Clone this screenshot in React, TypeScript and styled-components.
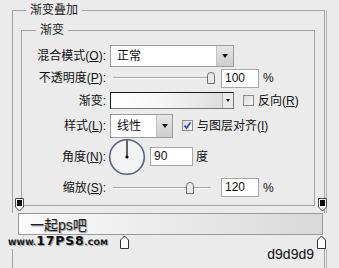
import React from 'react';
import styled, { createGlobalStyle } from 'styled-components';

const GlobalStyle = createGlobalStyle`
  html, body { margin: 0; padding: 0; background: #ebebeb; }
  body { font-family: "Liberation Sans", "Noto Sans CJK SC", sans-serif; }
`;

const cjk = `"Liberation Sans", "Noto Sans CJK SC", sans-serif`;

const Page = styled.div`
  position: relative;
  width: 339px;
  height: 268px;
  overflow: hidden;
  background: #ebebeb;
  color: #000;
  font-size: 12px;
`;

const Group = styled.fieldset<{ $outer?: boolean }>`
  box-sizing: border-box;
  min-width: 0;
  margin: ${p => (p.$outer ? '4px 0 0 12px' : '0')};
  width: ${p => (p.$outer ? '313px' : '294px')};
  height: ${p => (p.$outer ? '300px' : 'auto')};
  padding: ${p => (p.$outer ? '7px 0 0 8px' : '7px 0 4px 0')};
  border: 1px solid #a3a3a3;
`;

const Title = styled.legend<{ $offset: number }>`
  margin-left: ${p => p.$offset}px;
  padding: 0 4px;
  font-family: ${cjk};
  font-size: 12px;
  line-height: 13px;
  color: #1a1a1a;
`;

const Form = styled.div`
  display: grid;
  grid-template-columns: 84px 1fr;
  grid-template-rows: 23px 22px 23px 27px 35px 27px;
  column-gap: 4px;
  align-items: center;
`;

const Label = styled.label`
  text-align: right;
  font-family: ${cjk};
  font-size: 12px;
  line-height: 14px;
  white-space: nowrap;
  color: #111;
`;

const Key = styled.span`
  text-decoration: underline;
`;

const Controls = styled.div`
  display: flex;
  align-items: center;
  font-family: ${cjk};
  font-size: 12px;
  line-height: 14px;
  white-space: nowrap;
  color: #111;
`;

const Select = styled.div<{ $w: number; $h: number }>`
  box-sizing: border-box;
  display: flex;
  width: ${p => p.$w}px;
  height: ${p => p.$h}px;
  border: 1px solid #9c9c9c;
  background: #fff;
`;

const SelectText = styled.span`
  flex: 1;
  display: flex;
  align-items: center;
  padding-left: 6px;
`;

const DropButton = styled.span<{ $w: number }>`
  width: ${p => p.$w}px;
  display: flex;
  align-items: center;
  justify-content: center;
  background: linear-gradient(#e6e6e6, #cdcdcd);
  border-left: 1px solid #c2c2c2;

  &::after {
    content: '';
    border-left: 3px solid transparent;
    border-right: 3px solid transparent;
    border-top: 4px solid #111;
  }
`;

const GradientPick = styled.div`
  box-sizing: border-box;
  display: flex;
  justify-content: flex-end;
  width: 124px;
  height: 17px;
  border: 1px solid #1c1c1c;
  border-right-color: #777;
  border-bottom-color: #777;
  background: linear-gradient(to right, #ffffff 0%, #f6f6f6 40%, #d9d9d9 100%);
`;

const PickArrow = styled.span`
  width: 10px;
  display: flex;
  align-items: center;
  justify-content: center;
  background: #e9e9e9;
  border-left: 1px solid #b5b5b5;

  &::after {
    content: '';
    border-left: 2px solid transparent;
    border-right: 2px solid transparent;
    border-top: 3px solid #111;
  }
`;

const Slider = styled.div`
  position: relative;
  width: 98px;
  height: 12px;
  margin: 0 10px 0 3px;
`;

const Track = styled.div`
  margin-top: 5px;
  height: 1px;
  background: #a8a8a8;
  border-bottom: 1px solid #fbfbfb;
`;

const Thumb = styled.svg`
  position: absolute;
  top: 0;
  width: 8px;
  height: 12px;
  transform: translateX(-4px);
`;

const NumBox = styled.div<{ $w: number }>`
  box-sizing: border-box;
  width: ${p => p.$w}px;
  height: 19px;
  padding-left: 3px;
  border: 1px solid #a8a8a8;
  background: #fff;
  font-family: "Liberation Sans", sans-serif;
  font-size: 12px;
  line-height: 17px;
`;

const Unit = styled.span<{ $gap: number }>`
  margin-left: ${p => p.$gap}px;
`;

const Box = styled.span<{ $gap: number }>`
  box-sizing: border-box;
  display: flex;
  align-items: center;
  justify-content: center;
  width: 11px;
  height: 11px;
  margin: 0 4px 0 ${p => p.$gap}px;
  border: 1px solid #8d8d8d;
  background: linear-gradient(135deg, #d9d9d9, #f9f9f9);
`;

const Dial = styled.svg`
  width: 38px;
  height: 38px;
  margin: 0 4px 0 -2px;
`;

const Band = styled.div`
  position: relative;
  margin: -8px 0 0 -21px;
  width: 339px;
`;

const StopRow = styled.div<{ $h: number; $fill?: boolean }>`
  position: relative;
  height: ${p => p.$h}px;
  background: ${p => (p.$fill ? '#ebebeb' : 'transparent')};
`;

const Stop = styled.svg<{ $x: number }>`
  position: absolute;
  top: 0;
  left: ${p => p.$x}px;
  width: 9px;
  height: 14px;
`;

const BarRow = styled.div`
  padding-left: 18px;
  background: #ebebeb;
`;

const Bar = styled.div`
  box-sizing: border-box;
  display: flex;
  align-items: center;
  width: 305px;
  height: 22px;
  padding-left: 11px;
  border: 1px solid #9a9a9a;
  background: linear-gradient(to right, #fbfbfb, #d9d9d9);
  font-family: ${cjk};
  font-size: 14px;
  color: #222;
  text-shadow: 1px 1px 1px #8a8a8a;
`;

const Watermark = styled.div`
  position: absolute;
  left: 8px;
  top: 37px;
  font-family: "DejaVu Sans", sans-serif;
  font-weight: bold;
  color: #111;
  line-height: 11px;
  text-shadow: 1px 1px 0 #9c9c9c;
  white-space: nowrap;
`;

const Mark = styled.span<{ $big?: boolean }>`
  font-size: ${p => (p.$big ? 12.5 : 7.5)}px;
  letter-spacing: ${p => (p.$big ? 0.8 : 0.3)}px;
`;

const Hex = styled.div`
  margin-top: -2px;
  padding-right: 10px;
  text-align: right;
  font-family: "Liberation Sans", sans-serif;
  font-size: 14px;
  line-height: 15px;
  color: #111;
`;

const Edge = styled.div`
  position: absolute;
  top: 10px;
  bottom: 0;
  left: 326px;
  width: 1px;
  background: #b4b4b4;
`;

const ThumbIcon: React.FC<{ pct: number }> = ({ pct }) => (
  <Thumb viewBox="0 0 8 12" style={{ left: `${pct}%` }}>
    <path d="M0.5 11.5 V3.5 Q0.5 0.5 4 0.5 Q7.5 0.5 7.5 3.5 V11.5 Z" fill="#e9e9e9" stroke="#6f6f6f" />
  </Thumb>
);

const TopStop: React.FC<{ x: number }> = ({ x }) => (
  <Stop $x={x} viewBox="0 0 9 14">
    <path d="M0.5 0.5 H8.5 V9 L4.5 13 L0.5 9 Z" fill="#f4f4f4" stroke="#4a4a4a" />
    <rect x="2" y="2" width="5" height="6" fill="#0a0a0a" />
  </Stop>
);

const BottomStop: React.FC<{ x: number }> = ({ x }) => (
  <Stop $x={x} viewBox="0 0 9 14">
    <path d="M4.5 1 L8.5 5 V13.5 H0.5 V5 Z" fill="#fbfbfb" stroke="#333" />
  </Stop>
);

export default function App() {
  const opacity = 100;
  const scale = 120;

  return (
    <Page>
      <GlobalStyle />
      <Edge />
      <Group $outer>
        <Title $offset={5}>渐变叠加</Title>
        <Group>
          <Title $offset={14}>渐变</Title>
          <Form>
            <Label>混合模式(<Key>O</Key>):</Label>
            <Controls>
              <Select $w={124} $h={22}>
                <SelectText>正常</SelectText>
                <DropButton $w={16} />
              </Select>
            </Controls>

            <Label>不透明度(<Key>P</Key>):</Label>
            <Controls>
              <Slider>
                <Track />
                <ThumbIcon pct={opacity} />
              </Slider>
              <NumBox $w={38}>{opacity}</NumBox>
              <Unit $gap={4}>%</Unit>
            </Controls>

            <Label>渐变:</Label>
            <Controls>
              <GradientPick>
                <PickArrow />
              </GradientPick>
              <Box $gap={9} />
              <span>反向(<Key>R</Key>)</span>
            </Controls>

            <Label>样式(<Key>L</Key>):</Label>
            <Controls>
              <Select $w={63} $h={24}>
                <SelectText>线性</SelectText>
                <DropButton $w={15} />
              </Select>
              <Box $gap={9}>
                <svg width="9" height="9" viewBox="0 0 9 9">
                  <path d="M1.5 4.5 L3.5 7 L7.5 1.5" fill="none" stroke="#2b4fb8" strokeWidth="1.8" />
                </svg>
              </Box>
              <span>与图层对齐(<Key>I</Key>)</span>
            </Controls>

            <Label>角度(<Key>N</Key>):</Label>
            <Controls>
              <Dial viewBox="0 0 38 38">
                <circle cx="19" cy="19" r="17.3" fill="#f3f3f3" stroke="#56627c" strokeWidth="1.6" />
                <line x1="19" y1="2.5" x2="19" y2="19" stroke="#000" strokeWidth="1.2" />
                <circle cx="19" cy="19" r="1.6" fill="#000" />
              </Dial>
              <NumBox $w={43}>90</NumBox>
              <Unit $gap={3}>度</Unit>
            </Controls>

            <Label>缩放(<Key>S</Key>):</Label>
            <Controls>
              <Slider>
                <Track />
                <ThumbIcon pct={(scale / 150) * 100 - 1} />
              </Slider>
              <NumBox $w={38}>{scale}</NumBox>
              <Unit $gap={4}>%</Unit>
            </Controls>
          </Form>
        </Group>

        <Band>
          <StopRow $h={15}>
            <TopStop x={15} />
            <TopStop x={318} />
          </StopRow>
          <BarRow>
            <Bar>一起ps吧</Bar>
          </BarRow>
          <StopRow $h={14} $fill>
            <BottomStop x={120} />
            <BottomStop x={317} />
          </StopRow>
          <Watermark>
            <Mark>WWW.</Mark>
            <Mark $big>17PS8</Mark>
            <Mark>.COM</Mark>
          </Watermark>
        </Band>
        <Hex>d9d9d9</Hex>
      </Group>
    </Page>
  );
}
